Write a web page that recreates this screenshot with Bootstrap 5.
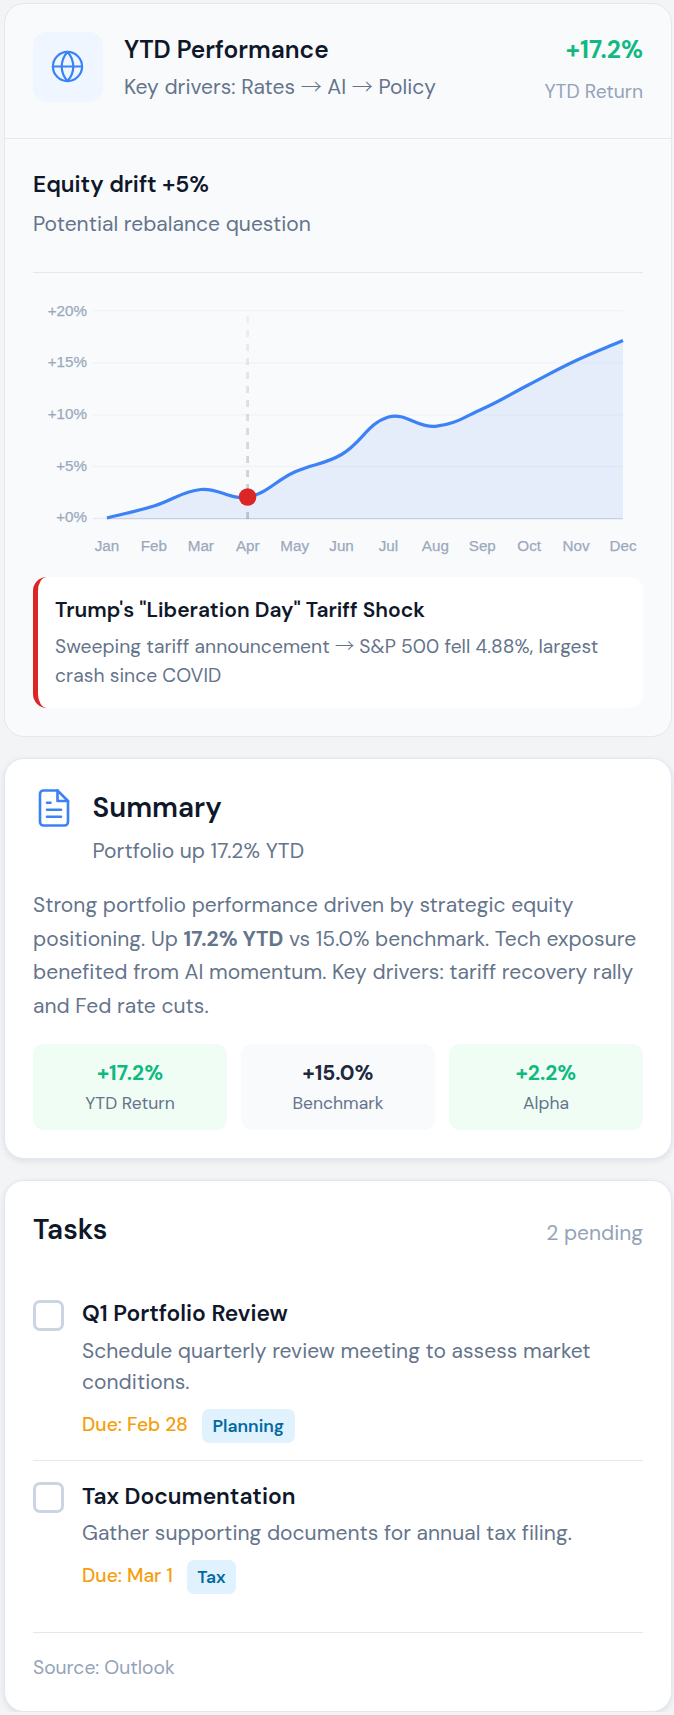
<!DOCTYPE html>
<html lang="en">
<head>
<meta charset="utf-8">
<meta name="viewport" content="width=device-width, initial-scale=1">
<title>Portfolio overview</title>
<link rel="stylesheet" href="https://cdn.jsdelivr.net/npm/bootstrap@5.3.0/dist/css/bootstrap.min.css">
<style>
body{background:#f3f4f6;font-family:"DM Sans",Inter,sans-serif;font-size:21px;line-height:30px;color:#64748b;padding:3px 2px 0 4px;white-space:nowrap}
.panel{--bs-card-border-color:#e2e8f0;--bs-card-border-radius:20px;--bs-card-bg:#fff;color:inherit}
.panel-soft{--bs-card-bg:#f9fafc;height:734px}
.panel-raised{box-shadow:0 2px 6px rgba(15,23,42,.09)}
.ink{color:#0f172a;font-weight:600}
.faint{color:#94a3b8}
.gain{color:#10b981}
.px-panel{padding-left:28px;padding-right:28px}
.rule{border-color:#e2e8f0!important}
.rule-grey{border-color:#e5e7eb!important}
.arrow{font-family:"Noto Sans CJK SC",sans-serif;font-weight:300;line-height:0}

.perf-head{height:135px;padding-top:28px}
.globe-tile{width:70px;height:70px;border-radius:14px;background:#eff6ff;margin-right:21px;padding-right:1px;padding-bottom:1px}
.perf-title{font-size:24.5px;padding-top:3px}
.perf-sub{margin-top:7px;letter-spacing:.02px}
.perf-label{font-size:19.25px;line-height:28px;margin-top:13px}
.drift{padding-top:30px;padding-bottom:33px;margin:0 28px}
.drift-title{font-size:22.75px}
.drift-sub{margin-top:10px;letter-spacing:.03px}
.chart{width:610px;height:304px;margin:0 28px}
.chart text{font-family:"Liberation Sans",sans-serif;font-size:15.2px;fill:#9ba9bc;stroke:#9ba9bc;stroke-width:.25px}
.event{margin:0 28px;height:131px;padding:19px 17px 17px;background:#fff;border-left:5px solid #dc2626;border-radius:14px}
.event-title{line-height:28px}
.event-text{font-size:19.25px;line-height:29px;margin-top:7.5px;letter-spacing:.04px;white-space:normal}

.summary{margin-top:21px;height:401px;padding-top:28px}
.summary-icon{margin-right:17.5px}
.section-title{font-size:28px;line-height:36px}
.summary-title{padding-top:3px}
.summary-sub{margin-top:10px;letter-spacing:.03px}
.summary-text{margin:23px 0 20px;line-height:33.67px;letter-spacing:.03px}
.figure-tile{height:86px;border-radius:11px;padding-top:15px}
.tile-gain{background:#f0fdf4}
.tile-flat{background:#f8fafc}
.tile-value{line-height:28px}
.tile-label{font-size:17.5px;line-height:26px;margin-top:3px}

.tasks{margin-top:21px;height:532px}
.tasks-head{padding-top:31px;height:97px}
.pending{margin-top:6px}
.task{padding-top:20px;padding-bottom:17px}
.task-last{padding-bottom:38px}
.check.form-check-input{width:31px;height:31px;margin:2px 18px 0 0;border:3px solid #cbd5e1;border-radius:7px}
.task-last .check.form-check-input{margin-top:1px}
.task-title{font-size:22.75px;line-height:31px}
.task-text{line-height:31px;margin-top:6.5px;letter-spacing:.03px;white-space:normal}
.task-meta{margin-top:11px}
.due{font-size:19.25px;line-height:28px;font-weight:500;color:#f59e0b;margin-top:2px}
.task-last .due{margin-top:1.5px}
.tag{font-size:17.5px;line-height:34px;font-weight:600;padding:0 10.5px;border-radius:7px;background:#e0f2fe;color:#0369a1;margin-left:14px}
.source{font-size:19.25px;line-height:28px;padding-top:21px}
</style>
<script src="https://cdn.jsdelivr.net/npm/bootstrap@5.3.0/dist/js/bootstrap.bundle.min.js"></script>
</head>
<body>
<main>
  <section class="card panel panel-soft">
    <header class="perf-head px-panel d-flex align-items-start border-bottom rule">
      <div class="globe-tile d-flex align-items-center justify-content-center flex-shrink-0">
        <svg width="35" height="35" viewBox="0 0 24 24" fill="none" stroke="#3b82f6" stroke-width="1.5" stroke-linecap="round" stroke-linejoin="round"><circle cx="12" cy="12" r="10"/><path d="M2 12h20M12 2a15.3 15.3 0 0 1 4 10 15.3 15.3 0 0 1-4 10 15.3 15.3 0 0 1-4-10 15.3 15.3 0 0 1 4-10z"/></svg>
      </div>
      <div class="flex-grow-1">
        <div class="perf-title ink">YTD Performance</div>
        <div class="perf-sub">Key drivers: Rates <span class="arrow">→</span> AI <span class="arrow">→</span> Policy</div>
      </div>
      <div class="text-end">
        <div class="perf-title gain fw-bold">+17.2%</div>
        <div class="perf-label faint">YTD Return</div>
      </div>
    </header>
    <div class="drift border-bottom rule-grey">
      <div class="drift-title ink">Equity drift +5%</div>
      <div class="drift-sub">Potential rebalance question</div>
    </div>
    <svg class="chart d-block" viewBox="33 273 610 304">
      <defs><linearGradient id="fade" gradientUnits="userSpaceOnUse" x1="0" y1="310" x2="0" y2="519"><stop offset="0" stop-color="#6b7280" stop-opacity=".07"/><stop offset="1" stop-color="#6b7280" stop-opacity=".36"/></linearGradient></defs>
      <path d="M93 310.7H623M93 363H623M93 415H623M93 466.5H623" stroke="#f1f3f7" stroke-width="1.3"/>
      <path d="M93 518.5H107" stroke="#e8ecf2" stroke-width="1.3"/>
      <path id="area" fill="#3b82f6" fill-opacity=".1"/>
      <path d="M107 518.6H623" stroke="#c6d0df" stroke-width="1.4"/>
      <path id="curve" fill="none" stroke="#3b82f6" stroke-width="3.2"/>
      <path d="M247.6 316V519" stroke="url(#fade)" stroke-width="2.8" stroke-dasharray="7 7"/>
      <circle cx="247.6" cy="497" r="8.8" fill="#dc2626"/>
      <g text-anchor="end"><text x="87" y="315.7">+20%</text><text x="87" y="367">+15%</text><text x="87" y="419.2">+10%</text><text x="87" y="471.2">+5%</text><text x="87" y="521.8">+0%</text></g>
      <g id="months" text-anchor="middle"></g>
    </svg>
    <div class="event">
      <div class="event-title ink">Trump's "Liberation Day" Tariff Shock</div>
      <div class="event-text">Sweeping tariff announcement <span class="arrow">→</span> S&amp;P 500 fell 4.88%, largest crash since COVID</div>
    </div>
  </section>

  <section class="card panel panel-raised summary px-panel">
    <div class="d-flex align-items-start">
      <svg class="summary-icon flex-shrink-0" width="42" height="42" viewBox="0 0 24 24" fill="none" stroke="#3b82f6" stroke-width="1.5" stroke-linecap="round" stroke-linejoin="round"><path d="M14 2H6a2 2 0 0 0-2 2v16a2 2 0 0 0 2 2h12a2 2 0 0 0 2-2V8z"/><path d="M14 2v6h6M16 13H8M16 17H8M10 9H8"/></svg>
      <div>
        <div class="section-title summary-title ink">Summary</div>
        <div class="summary-sub">Portfolio up 17.2% YTD</div>
      </div>
    </div>
    <div class="summary-text">Strong portfolio performance driven by strategic equity<br>positioning. Up <strong>17.2% YTD</strong> vs 15.0% benchmark. Tech exposure<br>benefited from AI momentum. Key drivers: tariff recovery rally<br>and Fed rate cuts.</div>
    <div class="d-flex text-center" style="gap:14px">
      <div class="figure-tile tile-gain flex-fill w-100"><div class="tile-value gain fw-bold">+17.2%</div><div class="tile-label">YTD Return</div></div>
      <div class="figure-tile tile-flat flex-fill w-100"><div class="tile-value fw-bold" style="color:#1e293b">+15.0%</div><div class="tile-label">Benchmark</div></div>
      <div class="figure-tile tile-gain flex-fill w-100"><div class="tile-value gain fw-bold">+2.2%</div><div class="tile-label">Alpha</div></div>
    </div>
  </section>

  <section class="card panel panel-raised tasks px-panel">
    <div class="tasks-head d-flex justify-content-between align-items-start">
      <div class="section-title ink">Tasks</div>
      <div class="pending faint">2 pending</div>
    </div>
    <div class="task d-flex align-items-start border-bottom rule-grey">
      <input class="form-check-input check flex-shrink-0" type="checkbox" aria-label="Q1 Portfolio Review">
      <div>
        <div class="task-title ink">Q1 Portfolio Review</div>
        <div class="task-text">Schedule quarterly review meeting to assess market conditions.</div>
        <div class="task-meta d-flex align-items-start"><span class="due">Due: Feb 28</span><span class="tag">Planning</span></div>
      </div>
    </div>
    <div class="task task-last d-flex align-items-start border-bottom rule-grey">
      <input class="form-check-input check flex-shrink-0" type="checkbox" aria-label="Tax Documentation">
      <div>
        <div class="task-title ink">Tax Documentation</div>
        <div class="task-text">Gather supporting documents for annual tax filing.</div>
        <div class="task-meta d-flex align-items-start"><span class="due">Due: Mar 1</span><span class="tag">Tax</span></div>
      </div>
    </div>
    <div class="source faint">Source: Outlook</div>
  </section>
</main>
<script>
const names = ['Jan','Feb','Mar','Apr','May','Jun','Jul','Aug','Sep','Oct','Nov','Dec'];
const ys = [518,506,489.5,497,472,454.5,417,426.3,409,384.5,360.5,340.5];
const step = (623 - 107) / 11, tension = .4;
const pts = ys.map((y, i) => [107 + i * step, y]);
const dist = (a, b) => Math.hypot(b[0] - a[0], b[1] - a[1]);
// Smoothed line: control points lie along the chord of each point's neighbours.
const ctrl = pts.map((p, i) => {
  const a = pts[i - 1] || p, b = pts[i + 1] || p, l = dist(a, p), r = dist(p, b);
  const before = tension * l / (l + r), after = tension * r / (l + r);
  return [[p[0] - before * (b[0] - a[0]), p[1] - before * (b[1] - a[1])], [p[0] + after * (b[0] - a[0]), p[1] + after * (b[1] - a[1])]];
});
let d = 'M' + pts[0];
for (let i = 1; i < pts.length; i++) d += `C${ctrl[i - 1][1]} ${ctrl[i][0]} ${pts[i]}`;
document.getElementById('curve').setAttribute('d', d);
document.getElementById('area').setAttribute('d', d + 'V518.5H107Z');
document.getElementById('months').innerHTML = names.map((n, i) => `<text x="${107 + i * step}" y="551">${n}</text>`).join('');
</script>
</body>
</html>
